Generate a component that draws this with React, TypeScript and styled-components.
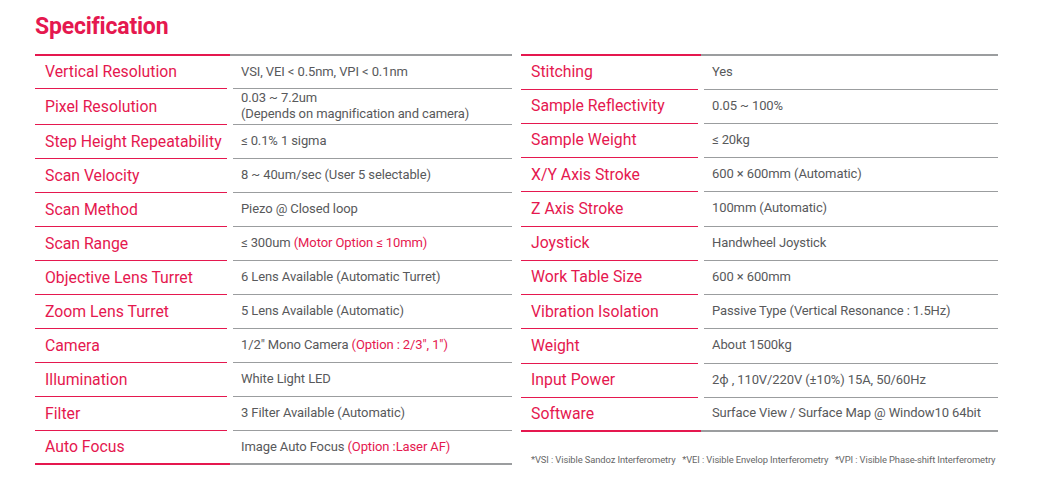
import styled, { createGlobalStyle } from "styled-components";

const GlobalStyle = createGlobalStyle`
  html, body {
    margin: 0;
    padding: 0;
    background: #ffffff;
  }
  body {
    font-family: Roboto, "Noto Sans", Arial, sans-serif;
  }
`;

const PINK = "#e5184f";
const GREY = "#9b9d9f";

const Page = styled.div`
  width: 1050px;
  height: 495px;
  box-sizing: border-box;
  padding: 12px 0 0 35px;
  background: #fff;
`;

const Title = styled.h1`
  margin: 0 0 12px 0;
  font-size: 23px;
  line-height: 30px;
  font-weight: 700;
  color: ${PINK};
  letter-spacing: -0.2px;
`;

const Tables = styled.div`
  display: flex;
  gap: 9px;
  align-items: flex-start;
`;

const Column = styled.div`
  display: flex;
  flex-direction: column;
`;

const Table = styled.div<{ $label: number; $value: number }>`
  display: grid;
  grid-template-columns: ${(p) => p.$label}px ${(p) => p.$value}px;
  border-top: 2px solid;
  border-image: linear-gradient(
      to right,
      ${PINK} 0,
      ${PINK} ${(p) => p.$label}px,
      ${GREY} ${(p) => p.$label}px,
      ${GREY} 100%
    )
    1;
`;

const Label = styled.div<{ $last?: boolean; $h: number }>`
  height: ${(p) => p.$h}px;
  box-sizing: border-box;
  display: flex;
  align-items: center;
  padding: 0 0 1px 10px;
  margin-right: ${(p) => (p.$last ? 0 : 3)}px;
  border-bottom: ${(p) => (p.$last ? "2px" : "1.5px")} solid ${PINK};
  color: ${PINK};
  font-size: 15.8px;
  white-space: nowrap;
`;

const Value = styled.div<{ $last?: boolean; $h: number }>`
  height: ${(p) => p.$h}px;
  box-sizing: border-box;
  display: flex;
  flex-direction: column;
  justify-content: center;
  padding: 0 0 1px ${(p) => (p.$last ? 11 : 8)}px;
  margin-left: ${(p) => (p.$last ? 0 : 3)}px;
  border-bottom: ${(p) => (p.$last ? "2px" : "1.5px")} solid ${GREY};
  color: #58595b;
  font-size: 13px;
  line-height: 16px;
  letter-spacing: -0.1px;
  white-space: nowrap;
`;

const Accent = styled.span`
  color: ${PINK};
`;

const Footnote = styled.p`
  margin: 22px 0 0 10px;
  font-size: 9.4px;
  color: #666;
  white-space: pre;
  letter-spacing: -0.1px;
`;

type Row = { label: string; value: React.ReactNode; h?: number };

const leftRows: Row[] = [
  { label: "Vertical Resolution", value: "VSI, VEI < 0.5nm, VPI < 0.1nm", h: 33 },
  {
    label: "Pixel Resolution",
    value: (
      <>
        <span>0.03 ~ 7.2um</span>
        <span>(Depends on magnification and camera)</span>
      </>
    ),
    h: 36,
  },
  { label: "Step Height Repeatability", value: "≤ 0.1% 1 sigma" },
  { label: "Scan Velocity", value: "8 ~ 40um/sec (User 5 selectable)" },
  { label: "Scan Method", value: "Piezo @ Closed loop" },
  {
    label: "Scan Range",
    value: (
      <span>
        ≤ 300um <Accent>(Motor Option ≤ 10mm)</Accent>
      </span>
    ),
  },
  { label: "Objective Lens Turret", value: "6 Lens Available (Automatic Turret)" },
  { label: "Zoom Lens Turret", value: "5 Lens Available (Automatic)" },
  {
    label: "Camera",
    value: (
      <span>
        1/2" Mono Camera <Accent>(Option : 2/3", 1")</Accent>
      </span>
    ),
  },
  { label: "Illumination", value: "White Light LED" },
  { label: "Filter", value: "3 Filter Available (Automatic)" },
  {
    label: "Auto Focus",
    value: (
      <span>
        Image Auto Focus <Accent>(Option :Laser AF)</Accent>
      </span>
    ),
  },
];

const rightRows: Row[] = [
  { label: "Stitching", value: "Yes", h: 33.5 },
  { label: "Sample Reflectivity", value: "0.05 ~ 100%" },
  { label: "Sample Weight", value: "≤ 20kg" },
  { label: "X/Y Axis Stroke", value: "600 × 600mm (Automatic)" },
  { label: "Z Axis Stroke", value: "100mm (Automatic)" },
  { label: "Joystick", value: "Handwheel Joystick" },
  { label: "Work Table Size", value: "600 × 600mm" },
  { label: "Vibration Isolation", value: "Passive Type (Vertical Resonance : 1.5Hz)" },
  { label: "Weight", value: "About 1500kg" },
  { label: "Input Power", value: "2ϕ , 110V/220V (±10%) 15A, 50/60Hz" },
  { label: "Software", value: "Surface View / Surface Map @ Window10 64bit" },
];

function SpecTable({
  rows,
  label,
  value,
  rowHeight,
}: {
  rows: Row[];
  label: number;
  value: number;
  rowHeight: number;
}) {
  return (
    <Table $label={label} $value={value}>
      {rows.map((r, i) => {
        const last = i === rows.length - 1;
        const h = r.h ?? rowHeight;
        return [
          <Label key={`l${i}`} $last={last} $h={h}>
            {r.label}
          </Label>,
          <Value key={`v${i}`} $last={last} $h={h}>
            {r.value}
          </Value>,
        ];
      })}
    </Table>
  );
}

export default function App() {
  return (
    <>
      <GlobalStyle />
      <Page>
        <Title>Specification</Title>
        <Tables>
          <SpecTable rows={leftRows} label={195} value={282} rowHeight={34} />
          <Column>
            <SpecTable rows={rightRows} label={180} value={297} rowHeight={34.25} />
            <Footnote>
              {"*VSI : Visible Sandoz Interferometry   *VEI : Visible Envelop Interferometry   *VPI : Visible Phase-shift Interferometry"}
            </Footnote>
          </Column>
        </Tables>
      </Page>
    </>
  );
}
